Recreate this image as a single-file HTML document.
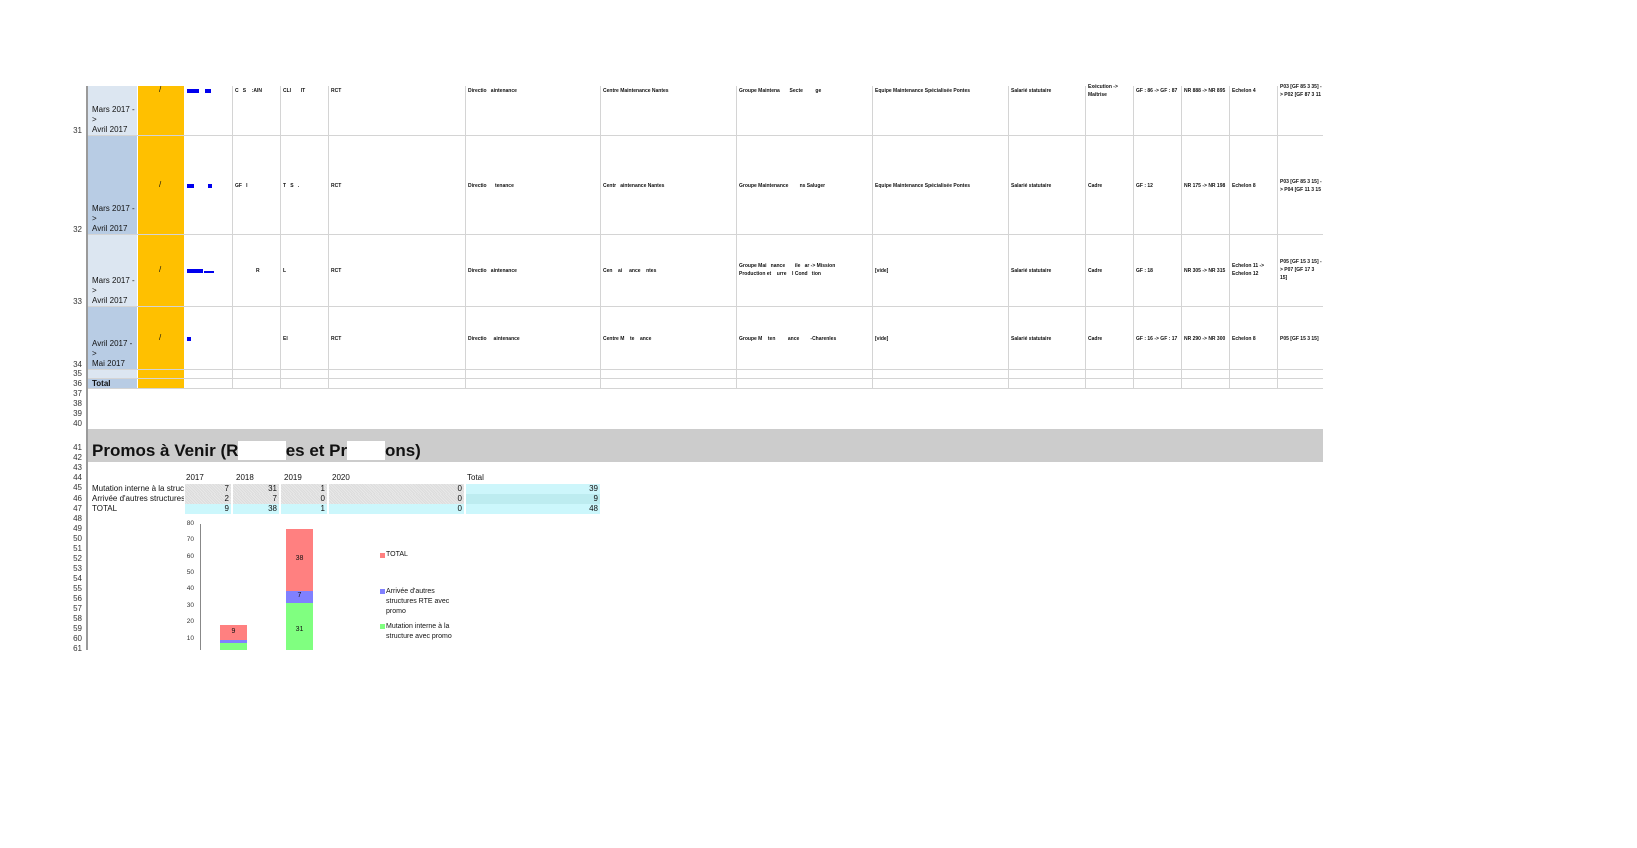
<!DOCTYPE html>
<html><head><meta charset="utf-8">
<style>
body{margin:0;background:#fff;width:1637px;height:848px;overflow:hidden;position:relative;font-family:"Liberation Sans",sans-serif}
div{position:absolute}
.v{width:1px;background:#d4d4d4}
.h{height:1px;background:#d4d4d4}
.rn{font-size:8px;color:#333;width:22px;text-align:right;left:60px}
.d{font-size:8px;color:#111;left:92px;line-height:10px}
.s{font-size:5px;font-weight:bold;color:#111;white-space:nowrap;line-height:8px}
.b{background:#0000ee;height:4px}
.t{font-size:8px;color:#111;white-space:nowrap}
.c{font-size:8px;color:#111;text-align:right;padding-right:2px;box-sizing:border-box;line-height:10px;height:10px}
.g{background:repeating-linear-gradient(45deg,#dcdcdc 0 1px,#e8e8e8 1px 2px)}
.y{font-size:6.5px;color:#333;text-align:right;width:12px;left:182px}
</style></head><body>
<div style="left:88px;top:86px;width:49px;height:49px;background:#dce6f1"></div>
<div style="left:88px;top:135px;width:49px;height:99px;background:#b8cce4"></div>
<div style="left:88px;top:234px;width:49px;height:72px;background:#dce6f1"></div>
<div style="left:88px;top:306px;width:49px;height:63px;background:#b8cce4"></div>
<div style="left:88px;top:369px;width:49px;height:9px;background:#dce6f1"></div>
<div style="left:88px;top:378px;width:49px;height:10px;background:#b8cce4"></div>
<div style="left:137px;top:86px;width:47px;height:302px;background:#ffc000"></div>
<div style="left:86px;top:86px;width:2px;height:564px;background:#9a9a9a"></div>
<div class="v" style="left:232px;top:86px;height:302px"></div>
<div class="v" style="left:280px;top:86px;height:302px"></div>
<div class="v" style="left:328px;top:86px;height:302px"></div>
<div class="v" style="left:465px;top:86px;height:302px"></div>
<div class="v" style="left:600px;top:86px;height:302px"></div>
<div class="v" style="left:736px;top:86px;height:302px"></div>
<div class="v" style="left:872px;top:86px;height:302px"></div>
<div class="v" style="left:1008px;top:86px;height:302px"></div>
<div class="v" style="left:1085px;top:86px;height:302px"></div>
<div class="v" style="left:1133px;top:86px;height:302px"></div>
<div class="v" style="left:1181px;top:86px;height:302px"></div>
<div class="v" style="left:1229px;top:86px;height:302px"></div>
<div class="v" style="left:1277px;top:86px;height:302px"></div>
<div style="left:137px;top:86px;width:1px;height:302px;background:#fff"></div>
<div style="left:184px;top:86px;width:1px;height:302px;background:#fff"></div>
<div class="h" style="left:88px;top:135px;width:1235px"></div>
<div class="h" style="left:88px;top:234px;width:1235px"></div>
<div class="h" style="left:88px;top:306px;width:1235px"></div>
<div class="h" style="left:88px;top:369px;width:1235px"></div>
<div class="h" style="left:88px;top:378px;width:1235px"></div>
<div class="h" style="left:88px;top:388px;width:1235px"></div>
<div class="rn" style="top:126px">31</div>
<div class="rn" style="top:225px">32</div>
<div class="rn" style="top:297px">33</div>
<div class="rn" style="top:360px">34</div>
<div class="rn" style="top:369px">35</div>
<div class="rn" style="top:379px">36</div>
<div class="rn" style="top:389px">37</div>
<div class="rn" style="top:399px">38</div>
<div class="rn" style="top:409px">39</div>
<div class="rn" style="top:419px">40</div>
<div class="rn" style="top:443px">41</div>
<div class="rn" style="top:453px">42</div>
<div class="rn" style="top:463px">43</div>
<div class="rn" style="top:473px">44</div>
<div class="rn" style="top:483px">45</div>
<div class="rn" style="top:494px">46</div>
<div class="rn" style="top:504px">47</div>
<div class="rn" style="top:514px">48</div>
<div class="rn" style="top:524px">49</div>
<div class="rn" style="top:534px">50</div>
<div class="rn" style="top:544px">51</div>
<div class="rn" style="top:554px">52</div>
<div class="rn" style="top:564px">53</div>
<div class="rn" style="top:574px">54</div>
<div class="rn" style="top:584px">55</div>
<div class="rn" style="top:594px">56</div>
<div class="rn" style="top:604px">57</div>
<div class="rn" style="top:614px">58</div>
<div class="rn" style="top:624px">59</div>
<div class="rn" style="top:634px">60</div>
<div class="rn" style="top:644px">61</div>
<div class="d" style="top:105px">Mars 2017 -<br>&gt;<br>Avril 2017</div>
<div class="d" style="top:204px">Mars 2017 -<br>&gt;<br>Avril 2017</div>
<div class="d" style="top:276px">Mars 2017 -<br>&gt;<br>Avril 2017</div>
<div class="d" style="top:339px">Avril 2017 -<br>&gt;<br>Mai 2017</div>
<div class="d" style="top:379px;font-weight:bold">Total</div>
<div class="t" style="left:159px;top:85px">/</div>
<div class="t" style="left:159px;top:180px">/</div>
<div class="t" style="left:159px;top:265px">/</div>
<div class="t" style="left:159px;top:333px">/</div>
<div class="b" style="left:187px;top:89px;width:12px"></div><div class="b" style="left:205px;top:89px;width:6px"></div>
<div class="b" style="left:187px;top:184px;width:7px"></div><div class="b" style="left:208px;top:184px;width:4px"></div>
<div class="b" style="left:187px;top:269px;width:16px"></div><div class="b" style="left:204px;top:271px;width:10px;height:2px"></div>
<div class="b" style="left:187px;top:337px;width:4px"></div>
<div class="s" style="left:235px;top:87px">C &nbsp; S &nbsp; &nbsp;:AIN</div>
<div class="s" style="left:283px;top:87px">CLI &nbsp; &nbsp; &nbsp; IT</div>
<div class="s" style="left:331px;top:87px">RCT</div>
<div class="s" style="left:468px;top:87px">Directio &nbsp; aintenance</div>
<div class="s" style="left:603px;top:87px">Centre Maintenance Nantes</div>
<div class="s" style="left:739px;top:87px">Groupe Maintena &nbsp; &nbsp; &nbsp; Secte &nbsp; &nbsp; &nbsp; &nbsp; ge</div>
<div class="s" style="left:875px;top:87px">Equipe Maintenance Spécialisée Pontes</div>
<div class="s" style="left:1011px;top:87px">Salarié statutaire</div>
<div class="s" style="left:1088px;top:83px">Exécution -&gt;<br>Maîtrise</div>
<div class="s" style="left:1136px;top:87px">GF : 86 -&gt; GF : 87</div>
<div class="s" style="left:1184px;top:87px">NR 888 -&gt; NR 895</div>
<div class="s" style="left:1232px;top:87px">Echelon 4</div>
<div class="s" style="left:1280px;top:83px;width:43px;overflow:hidden">P03 [GF 85 3 35] -<br>&gt; P02 [GF 87 3 11</div>
<div class="s" style="left:235px;top:182px">GF &nbsp; I</div>
<div class="s" style="left:283px;top:182px">T &nbsp; S &nbsp; .</div>
<div class="s" style="left:331px;top:182px">RCT</div>
<div class="s" style="left:468px;top:182px">Directio &nbsp; &nbsp; &nbsp;tenance</div>
<div class="s" style="left:603px;top:182px">Centr &nbsp; aintenance Nantes</div>
<div class="s" style="left:739px;top:182px">Groupe Maintenance &nbsp; &nbsp; &nbsp; &nbsp;ns Saluger</div>
<div class="s" style="left:875px;top:182px">Equipe Maintenance Spécialisée Pontes</div>
<div class="s" style="left:1011px;top:182px">Salarié statutaire</div>
<div class="s" style="left:1088px;top:182px">Cadre</div>
<div class="s" style="left:1136px;top:182px">GF : 12</div>
<div class="s" style="left:1184px;top:182px">NR 175 -&gt; NR 198</div>
<div class="s" style="left:1232px;top:182px">Echelon 8</div>
<div class="s" style="left:1280px;top:178px;width:43px;overflow:hidden">P03 [GF 85 3 15] -<br>&gt; P04 [GF 11 3 15</div>
<div class="s" style="left:256px;top:267px">R</div>
<div class="s" style="left:283px;top:267px">L</div>
<div class="s" style="left:331px;top:267px">RCT</div>
<div class="s" style="left:468px;top:267px">Directio &nbsp; aintenance</div>
<div class="s" style="left:603px;top:267px">Cen &nbsp; &nbsp;ai &nbsp; &nbsp; ance &nbsp; &nbsp;ntes</div>
<div class="s" style="left:739px;top:262px">Groupe Mai &nbsp; nance &nbsp; &nbsp; &nbsp; ile &nbsp; ar -&gt; Mission<br>Production et &nbsp; &nbsp;urre &nbsp; &nbsp;l Cond &nbsp; tion</div>
<div class="s" style="left:875px;top:267px">[vide]</div>
<div class="s" style="left:1011px;top:267px">Salarié statutaire</div>
<div class="s" style="left:1088px;top:267px">Cadre</div>
<div class="s" style="left:1136px;top:267px">GF : 18</div>
<div class="s" style="left:1184px;top:267px">NR 305 -&gt; NR 315</div>
<div class="s" style="left:1232px;top:262px">Echelon 11 -&gt;<br>Echelon 12</div>
<div class="s" style="left:1280px;top:258px;width:43px;overflow:hidden">P05 [GF 15 3 15] -<br>&gt; P07 [GF 17 3<br>15]</div>
<div class="s" style="left:283px;top:335px">EI</div>
<div class="s" style="left:331px;top:335px">RCT</div>
<div class="s" style="left:468px;top:335px">Directio &nbsp; &nbsp; aintenance</div>
<div class="s" style="left:603px;top:335px">Centre M &nbsp; &nbsp;te &nbsp; &nbsp;ance</div>
<div class="s" style="left:739px;top:335px">Groupe M &nbsp; &nbsp;ten &nbsp; &nbsp; &nbsp; &nbsp; ance &nbsp; &nbsp; &nbsp; &nbsp;-Charenles</div>
<div class="s" style="left:875px;top:335px">[vide]</div>
<div class="s" style="left:1011px;top:335px">Salarié statutaire</div>
<div class="s" style="left:1088px;top:335px">Cadre</div>
<div class="s" style="left:1136px;top:335px">GF : 16 -&gt; GF : 17</div>
<div class="s" style="left:1184px;top:335px">NR 290 -&gt; NR 300</div>
<div class="s" style="left:1232px;top:335px">Echelon 8</div>
<div class="s" style="left:1280px;top:335px;width:43px;overflow:hidden">P05 [GF 15 3 15]</div>
<div style="left:88px;top:429px;width:1235px;height:33px;background:#cccccc"></div>
<div style="left:92px;top:441px;font-size:17px;font-weight:bold;color:#111;white-space:nowrap">Promos à Venir (R<span style="color:#fff;background:#fff">éalisé</span>es et Pr<span style="color:#fff;background:#fff">évisi</span>ons)</div>
<div class="t" style="left:186px;top:473px">2017</div>
<div class="t" style="left:236px;top:473px">2018</div>
<div class="t" style="left:284px;top:473px">2019</div>
<div class="t" style="left:332px;top:473px">2020</div>
<div class="t" style="left:467px;top:473px">Total</div>
<div class="t" style="left:92px;top:484px;width:92px;overflow:hidden">Mutation interne à la structure</div>
<div class="t" style="left:92px;top:494px;width:92px;overflow:hidden">Arrivée d'autres structures</div>
<div class="t" style="left:92px;top:504px">TOTAL</div>
<div class="c g" style="left:185px;top:484px;width:46px">7</div>
<div class="c g" style="left:233px;top:484px;width:46px">31</div>
<div class="c g" style="left:281px;top:484px;width:46px">1</div>
<div class="c g" style="left:329px;top:484px;width:135px">0</div>
<div class="c" style="left:466px;top:484px;width:134px;background:#cdf6fb">39</div>
<div class="c g" style="left:185px;top:494px;width:46px">2</div>
<div class="c g" style="left:233px;top:494px;width:46px">7</div>
<div class="c g" style="left:281px;top:494px;width:46px">0</div>
<div class="c g" style="left:329px;top:494px;width:135px">0</div>
<div class="c" style="left:466px;top:494px;width:134px;background:#bdecf0">9</div>
<div class="c" style="left:185px;top:504px;width:46px;background:#ccf7fc">9</div>
<div class="c" style="left:233px;top:504px;width:46px;background:#ccf7fc">38</div>
<div class="c" style="left:281px;top:504px;width:46px;background:#ccf7fc">1</div>
<div class="c" style="left:329px;top:504px;width:135px;background:#ccf7fc">0</div>
<div class="c" style="left:466px;top:504px;width:134px;background:#ccf7fc">48</div>
<div style="left:200px;top:524px;width:1px;height:126px;background:#888"></div>
<div class="y" style="top:520px">80</div>
<div class="y" style="top:536px">70</div>
<div class="y" style="top:553px">60</div>
<div class="y" style="top:569px">50</div>
<div class="y" style="top:585px">40</div>
<div class="y" style="top:602px">30</div>
<div class="y" style="top:618px">20</div>
<div class="y" style="top:635px">10</div>
<div style="left:286px;top:529px;width:27px;height:62px;background:#ff8080"></div>
<div style="left:286px;top:591px;width:27px;height:12px;background:#8080ff"></div>
<div style="left:286px;top:603px;width:27px;height:47px;background:#80ff80"></div>
<div class="t" style="left:286px;top:555px;width:27px;text-align:center;font-size:7px">38</div>
<div class="t" style="left:286px;top:592px;width:27px;text-align:center;font-size:7px">7</div>
<div class="t" style="left:286px;top:626px;width:27px;text-align:center;font-size:7px">31</div>
<div style="left:220px;top:625px;width:27px;height:15px;background:#ff8080"></div>
<div style="left:220px;top:640px;width:27px;height:3px;background:#8080ff"></div>
<div style="left:220px;top:643px;width:27px;height:7px;background:#80ff80"></div>
<div class="t" style="left:220px;top:628px;width:27px;text-align:center;font-size:7px">9</div>
<div style="left:380px;top:553px;width:5px;height:5px;background:#ff8080"></div>
<div class="t" style="left:386px;top:551px;font-size:7px">TOTAL</div>
<div style="left:380px;top:589px;width:5px;height:5px;background:#8080ff"></div>
<div class="t" style="left:386px;top:587px;font-size:7px;line-height:10px">Arrivée d'autres<br>structures RTE avec<br>promo</div>
<div style="left:380px;top:624px;width:5px;height:5px;background:#80ff80"></div>
<div class="t" style="left:386px;top:622px;font-size:7px;line-height:10px">Mutation interne à la<br>structure avec promo</div>
</body></html>
